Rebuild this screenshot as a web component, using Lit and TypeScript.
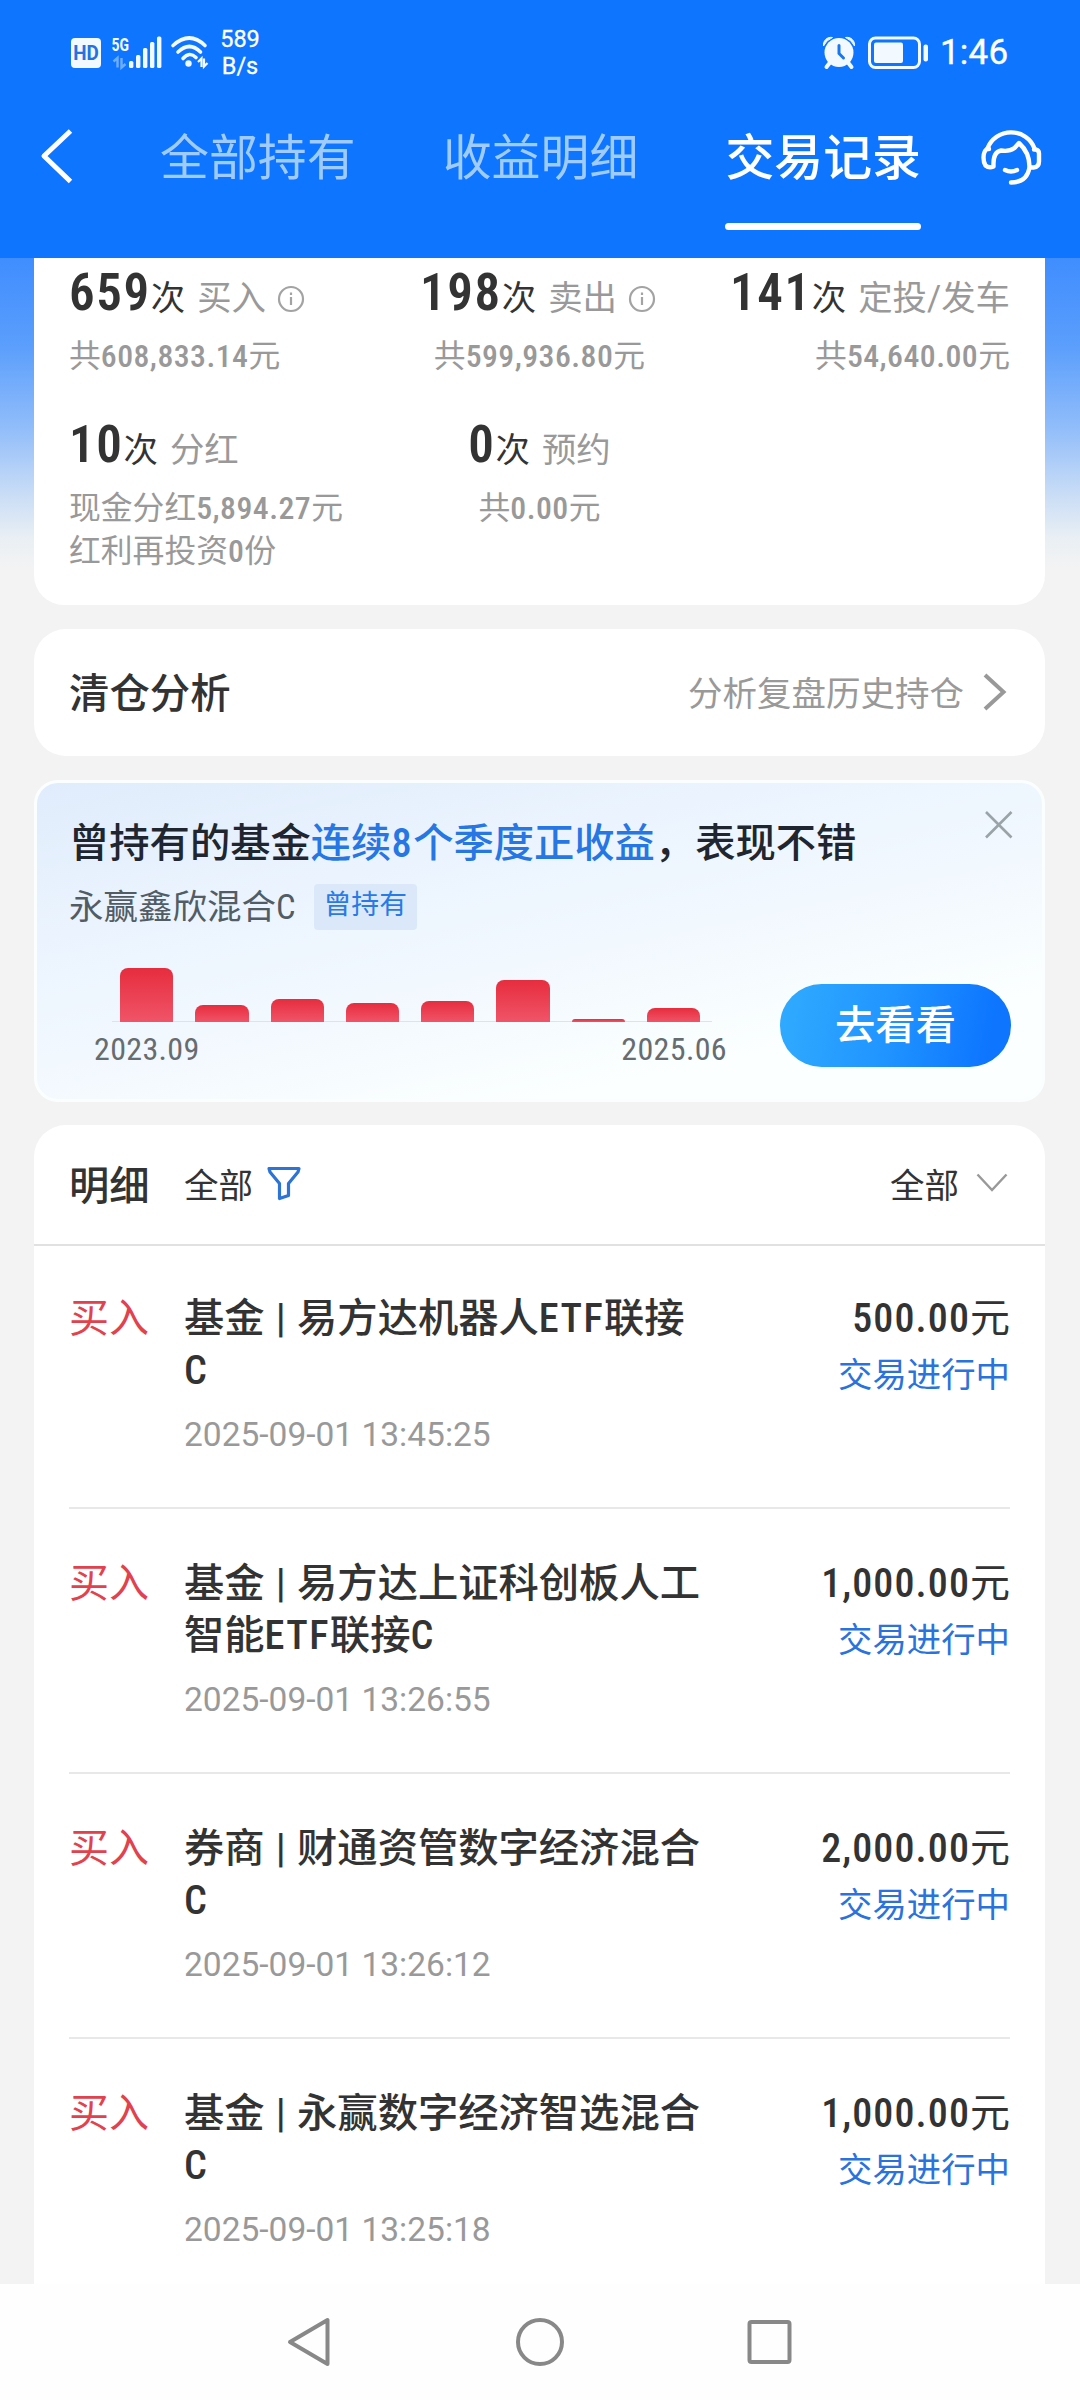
import { LitElement, html, css, svg } from "lit";
import { customElement, property } from "lit/decorators.js";

/** Wraps runs of Latin letters and digits so that they can be tracked apart from the Chinese text. */
const mix = (text: string) =>
  text
    .split(/([0-9A-Za-z.,:\-]+)/)
    .filter((part) => part !== "")
    .map((part) => (/^[0-9A-Za-z.,:\-]+$/.test(part) ? html`<span class="n">${part}</span>` : part));

const base = css`
  * { box-sizing: border-box; }
  :host {
    display: block;
    font-family: Roboto, "Noto Sans CJK SC", sans-serif;
    color: #333;
  }
  .n { font-stretch: 75%; }
  svg { display: block; flex: none; }
`;

@customElement("status-bar")
class StatusBar extends LitElement {
  static styles = [
    base,
    css`
      :host { height: 104px; color: #fff; }
      .bar { display: flex; justify-content: space-between; height: 104px; padding: 1px 72px 0 71px; }
      .side { display: flex; align-items: center; }
      .hd { font: 700 20px Roboto, sans-serif; fill: #2372e0; }
      .gen { font: 700 19px Roboto, sans-serif; fill: #f2f9ff; }
      .speed { width: 44px; margin-left: 9px; text-align: center; font-size: 23.5px; line-height: 27px; -webkit-text-stroke: 0.3px #fff; }
      .clock { width: 68px; margin-left: 11px; font-size: 35px; line-height: 40px; letter-spacing: 0.2px; -webkit-text-stroke: 0.4px #fff; }
    `,
  ];
  render() {
    return html`<div class="bar">
      <div class="side">
        <svg width="138" height="50" viewBox="71 28 138 50" fill="#f2f9ff">
          <rect x="71" y="38" width="30" height="30" rx="4" />
          <text class="hd" x="73.2" y="60.2" textLength="25.6" lengthAdjust="spacingAndGlyphs">HD</text>
          <text class="gen" x="111.5" y="50.5" textLength="17.5" lengthAdjust="spacingAndGlyphs">5G</text>
          <g stroke="#6fadff" stroke-width="2.4" fill="none">
            <path d="M113.5 61.5L117.5 58V67.500M125.500 64L121.500 67.500V58" />
          </g>
          ${[
            [129, 61],
            [136, 55],
            [143, 48],
            [150, 42],
            [157, 36.5],
          ].map(([x, y]) => svg`<rect x=${x} y=${y} width="4.400" height=${68 - y} rx="1.500" />`)}
          <g stroke="#f2f9ff" stroke-width="3.600" fill="none" stroke-linecap="round">
            <path d="M173 45.500Q189.500 30.500 205 45.500M178 52Q189.500 41 200.500 52M183 58.500Q189.500 51 196 57.500" />
          </g>
          <circle cx="188.500" cy="63.500" r="3.200" />
          <path d="M198 62L201.500 58.500V67M207.500 63L204 66.500V58.500" stroke="#f2f9ff" stroke-width="2.200" fill="none" />
        </svg>
        <div class="speed">589<br />B/s</div>
      </div>
      <div class="side">
        <svg width="106" height="34" viewBox="824 35.500 106 34" fill="#f2f9ff">
          <path d="M824.500 45.500A7.500 7.500 0 0 1 833.500 37A17 17 0 0 0 824.500 45.500ZM855.500 45.500A7.500 7.500 0 0 0 846.500 37A17 17 0 0 1 855.500 45.500Z" stroke="#f2f9ff" />
          <circle cx="840" cy="52" r="14.500" />
          <path d="M831 62L827.500 66.500M849 62L852.500 66.500" stroke="#f2f9ff" stroke-width="4" stroke-linecap="round" />
          <path d="M840 45V53L844.500 57.500" fill="none" stroke="#1976f3" stroke-width="3" stroke-linecap="round" />
          <rect x="870.500" y="37.500" width="50" height="29.500" rx="6" fill="none" stroke="#f2f9ff" stroke-width="3" />
          <rect x="875" y="42" width="29" height="20.500" rx="2" />
          <rect x="924.500" y="44" width="4.500" height="17" rx="2" />
        </svg>
        <div class="clock">1:46</div>
      </div>
    </div>`;
  }
}

@customElement("tab-header")
class TabHeader extends LitElement {
  static styles = [
    base,
    css`
      .row { display: flex; align-items: flex-start; height: 154px; padding: 0 38px 0 40px; color: #fff; }
      .tabs { flex: 1; display: flex; justify-content: space-between; padding: 25px 59px 0 86px; }
      .tab { font-size: 48.900px; line-height: 60px; color: #9fcbff; }
      .tab.on { color: #fff; font-weight: 500; }
      .tab.on::after { display: block; content: ""; height: 7px; margin-top: 33.500px; border-radius: 4px; background: #fff; }
      .glyph { margin-top: 24px; }
    `,
  ];
  render() {
    return html`<div class="row">
      <svg class="glyph" width="34" height="56" viewBox="40 128 34 56" fill="none" stroke="#fff" stroke-width="5">
        <path d="M70.500 131L44 156L70.500 181.500" stroke-linejoin="round" />
      </svg>
      <div class="tabs">
        <div class="tab">全部持有</div>
        <div class="tab">收益明细</div>
        <div class="tab on">交易记录</div>
      </div>
      <svg class="glyph" width="62" height="60" viewBox="980 127.500 62 60" fill="none" stroke="#fff" stroke-width="4.400" stroke-linecap="round" stroke-linejoin="round">
        <path d="M987.500 148A25 24.500 0 0 1 1034.500 148" />
        <path d="M989 148.500H987Q983.500 151 983.500 157Q983.500 162 985.500 165Q989 168 993.500 166V163Q993.500 151.500 1001 150Q1009 151.500 1014.500 147.500L1019 142.500Q1029.500 152 1029.500 166" />
        <path d="M1034 149H1035.500Q1039 149.500 1039 153V161Q1039 166.500 1033.500 167H1029.500Q1027 182 1011 182" />
        <path d="M1005 169.500Q1011 172.500 1017 169.500" />
      </svg>
    </div>`;
  }
}

type Stat = { count: string; label: string; info?: boolean; lines: string[] };

const stats: Stat[] = [
  { count: "659", label: "买入", info: true, lines: ["共608,833.14元"] },
  { count: "198", label: "卖出", info: true, lines: ["共599,936.80元"] },
  { count: "141", label: "定投/发车", lines: ["共54,640.00元"] },
  { count: "10", label: "分红", lines: ["现金分红5,894.27元", "红利再投资0份"] },
  { count: "0", label: "预约", lines: ["共0.00元"] },
];

@customElement("trade-stats")
class TradeStats extends LitElement {
  static styles = [
    base,
    css`
      .card {
        display: grid; grid-template-columns: repeat(3, 1fr); align-content: start;
        height: 347px; padding: 4px 35px 0 35px;
        background: #fff; border-radius: 0 0 30px 30px;
      }
      .stat { display: flex; flex-direction: column; height: 152px; white-space: nowrap; }
      .stat:nth-child(3n + 2) { align-items: center; }
      .stat:nth-child(3n) { align-items: flex-end; }
      .head { flex: none; display: flex; align-items: baseline; height: 72.500px; line-height: 62px; }
      .count { font-size: 51px; font-weight: 600; font-stretch: 75%; letter-spacing: 1.600px; }
      .unit { font-size: 34.400px; color: #333; }
      .label { font-size: 34.400px; color: #999; margin-left: 12px; }
      .info { align-self: center; margin: 2px 0 0 11px; }
      .stat:nth-child(2) .info { margin-right: 3px; }
      .line { flex: none; font-size: 31.800px; line-height: 43px; color: #999; }
      .line .n { letter-spacing: 0.450px; font-weight: 500; }
    `,
  ];
  render() {
    return html`<div class="card">
      ${stats.map(
        (s) => html`<div class="stat">
          <div class="head">
            <span class="count">${s.count}</span><span class="unit">次</span><span class="label">${s.label}</span>
            ${s.info
              ? html`<svg class="info" width="28" height="28" viewBox="0 0 28 28" fill="none" stroke="#a3a3a3" stroke-width="2.200">
                  <circle cx="14" cy="14" r="12" />
                  <path d="M14 12V20M14 7.500V10" />
                </svg>`
              : ""}
          </div>
          ${s.lines.map((l) => html`<div class="line">${mix(l)}</div>`)}
        </div>`
      )}
    </div>`;
  }
}

@customElement("clearance-link")
class ClearanceLink extends LitElement {
  static styles = [
    base,
    css`
      .card {
        display: flex; align-items: center; height: 127px; padding: 0 37px 4px 35px;
        background: #fff; border-radius: 32px;
      }
      .title { flex: 1; font-size: 40.400px; font-weight: 500; }
      .hint { font-size: 34.500px; color: #999; margin-right: 18px; }
      .arrow { margin-top: 2px; }
    `,
  ];
  render() {
    return html`<div class="card">
      <div class="title">清仓分析</div>
      <div class="hint">分析复盘历史持仓</div>
      <svg class="arrow" width="26" height="38" viewBox="0 0 26 38" fill="none" stroke="#999" stroke-width="4">
        <path d="M3 2L21.500 19L3 36" />
      </svg>
    </div>`;
  }
}

const quarters = [54, 17, 23, 19, 21, 41.5, 3, 14];

@customElement("fund-promo")
class FundPromo extends LitElement {
  static styles = [
    base,
    css`
      .card {
        height: 322px; padding: 33px 31px 0 32px; border: 3px solid #fbfeff; border-radius: 24px;
        background: linear-gradient(168deg, #e0ecfc 0%, #ebf4fe 30%, #f3f9fe 58%, #fbffff 80%);
      }
      .top { display: flex; justify-content: space-between; height: 59px; }
      .title { font-size: 40.300px; font-weight: 500; line-height: 56px; color: #1f2630; white-space: nowrap; }
      .title .n { letter-spacing: 1.600px; }
      .hot { color: #2676e3; }
      .close { margin: -6px -3px 0 0; }
      .fund { display: flex; align-items: center; height: 64px; margin-top: 0; }
      .name { padding-bottom: 5px; font-size: 34.500px; color: #525c64; white-space: nowrap; }
      .tag {
        height: 46px; margin-left: 18px; padding: 0 10px; border-radius: 4px; background: #dae8f9;
        color: #2a7ae6; font-size: 27.800px; line-height: 42px;
      }
      .bottom { display: flex; justify-content: space-between; margin-top: 2px; }
      .chart { width: 600px; margin-left: 43px; }
      .bars {
        display: flex; align-items: flex-end; gap: 22px; height: 81px; padding-left: 8px;
        border-bottom: 1px solid #dfe3e6;
      }
      .bar { width: 53.300px; border-radius: 8px 8px 0 0; background: linear-gradient(#e62d3e, #f05468); margin-bottom: -1px; }
      .dates {
        display: flex; justify-content: space-between; margin: 8px -15px 0 -18px;
        font-size: 32px; line-height: 38px; color: #666c70; font-stretch: 75%; letter-spacing: 0.350px;
      }
      .go {
        width: 231px; height: 83px; margin-top: 43.500px; border-radius: 42px; text-align: center;
        background: linear-gradient(100deg, #30abff, #2196ff 45%, #0d75ff 90%);
        color: #fff; font-size: 40.300px; font-weight: 500; line-height: 84px;
      }
    `,
  ];
  render() {
    return html`<div class="card">
      <div class="top">
        <div class="title">曾持有的基金<span class="hot">${mix("连续8个季度正收益")}</span>，表现不错</div>
        <svg class="close" width="30" height="30" viewBox="0 0 30 30" stroke="#9aa3a8" stroke-width="2.600">
          <path d="M2 2L27.500 27.500M27.500 2L2 27.500" />
        </svg>
      </div>
      <div class="fund">
        <div class="name">${mix("永赢鑫欣混合C")}</div>
        <div class="tag">曾持有</div>
      </div>
      <div class="bottom">
        <div class="chart">
          <div class="bars">${quarters.map((h) => html`<div class="bar" style="height:${h}px"></div>`)}</div>
          <div class="dates"><span>2023.09</span><span>2025.06</span></div>
        </div>
        <div class="go">去看看</div>
      </div>
    </div>`;
  }
}

@customElement("trade-row")
class TradeRow extends LitElement {
  static styles = [
    base,
    css`
      .row { display: flex; height: 265px; margin: 0 35px; padding-top: 49.500px; border-bottom: 2px solid #e8e8e8; }
      .kind { width: 115px; font-size: 40px; line-height: 52px; color: #e2414e; }
      .body { flex: 1; }
      .name { font-size: 40.300px; font-weight: 500; line-height: 52px; color: #333; word-spacing: 1.200px; }
      .name .n { letter-spacing: 1.400px; }
      .time { margin-top: 17.500px; font-size: 33.500px; line-height: 40px; color: #999; }
      .time .n { font-stretch: 100%; }
      .right { text-align: right; }
      .sum { font-size: 40px; line-height: 52px; }
      .sum .n { font-weight: 500; letter-spacing: 1.100px; }
      .state { margin-top: 4px; font-size: 34.400px; line-height: 52px; color: #2a72dc; }
    `,
  ];
  @property({ attribute: false }) lines: string[] = [];
  @property() time = "";
  @property() sum = "";
  render() {
    return html`<div class="row">
      <div class="kind">买入</div>
      <div class="body">
        <div class="name">${this.lines.map((l) => html`<div>${mix(l)}</div>`)}</div>
        <div class="time">${mix(this.time)}</div>
      </div>
      <div class="right">
        <div class="sum">${mix(this.sum)}</div>
        <div class="state">交易进行中</div>
      </div>
    </div>`;
  }
}

const trades = [
  { lines: ["基金 | 易方达机器人ETF联接", "C"], time: "2025-09-01 13:45:25", sum: "500.00元" },
  { lines: ["基金 | 易方达上证科创板人工", "智能ETF联接C"], time: "2025-09-01 13:26:55", sum: "1,000.00元" },
  { lines: ["券商 | 财通资管数字经济混合", "C"], time: "2025-09-01 13:26:12", sum: "2,000.00元" },
  { lines: ["基金 | 永赢数字经济智选混合", "C"], time: "2025-09-01 13:25:18", sum: "1,000.00元" },
];

@customElement("trade-list")
class TradeList extends LitElement {
  static styles = [
    base,
    css`
      .card { height: 1160px; overflow: hidden; background: #fff; border-radius: 32px 32px 0 0; }
      .head {
        display: flex; align-items: center; height: 121px; margin-bottom: -2.500px; padding: 0 37px 4px 35px;
        border-bottom: 2px solid #e1e1e1; font-size: 34.500px;
      }
      .title { width: 115px; font-size: 40.300px; font-weight: 500; }
      .filter { margin-left: 13px; }
      .sort { margin-left: auto; margin-right: 17px; }
    `,
  ];
  render() {
    return html`<div class="card">
      <div class="head">
        <div class="title">明细</div>
        <div>全部</div>
        <svg class="filter" width="36" height="36" viewBox="0 0 36 36" fill="none" stroke="#2d74d4" stroke-width="3.200" stroke-linejoin="round">
          <path d="M3 3.500H33L32 7L22.500 18.500V30.500L13.500 33.500V18.500L4 7Z" />
        </svg>
        <div class="sort">全部</div>
        <svg width="32" height="20" viewBox="0 0 32 20" fill="none" stroke="#999" stroke-width="2.400">
          <path d="M1.500 1.500L16 17L30.500 1.500" />
        </svg>
      </div>
      ${trades.map((t) => html`<trade-row .lines=${t.lines} .time=${t.time} .sum=${t.sum}></trade-row>`)}
    </div>`;
  }
}

@customElement("nav-keys")
class NavKeys extends LitElement {
  static styles = [
    base,
    css`
      .bar { display: flex; justify-content: center; align-items: center; gap: 180px; height: 116px; background: #fefefe; }
    `,
  ];
  render() {
    return html`<div class="bar">
      <svg width="50" height="50" viewBox="0 0 50 50" fill="none" stroke="#888" stroke-width="4" stroke-linejoin="round"><path d="M5 25L42.500 3V47Z" /></svg>
      <svg width="50" height="50" viewBox="0 0 50 50" fill="none" stroke="#888" stroke-width="4"><circle cx="25" cy="25" r="22" /></svg>
      <svg width="50" height="50" viewBox="0 0 50 50" fill="none" stroke="#888" stroke-width="4"><rect x="4.500" y="5" width="40" height="40" rx="2" /></svg>
    </div>`;
  }
}

@customElement("app-root")
class AppRoot extends LitElement {
  static styles = [
    base,
    css`
      .screen { display: flex; flex-direction: column; width: 1080px; height: 2400px; overflow: hidden; background: #f3f3f3; }
      .top { background: #0d75ff; }
      .content {
        display: flex; flex-direction: column; height: 2026px; padding: 0 35px 0 34px;
        background: linear-gradient(#3f8dff 0, #5c9ffc 90px, #91bdfa 170px, #c8dcf6 235px, #e9eff4 280px, #f3f3f3 310px);
      }
      .gap { margin-top: 24px; }
      .gap + .gap { margin-top: 23.500px; }
    `,
  ];
  render() {
    return html`<div class="screen">
      <div class="top">
        <status-bar></status-bar>
        <tab-header></tab-header>
      </div>
      <div class="content">
        <trade-stats></trade-stats>
        <clearance-link class="gap"></clearance-link>
        <fund-promo class="gap"></fund-promo>
        <trade-list class="gap"></trade-list>
      </div>
      <nav-keys></nav-keys>
    </div>`;
  }
}
